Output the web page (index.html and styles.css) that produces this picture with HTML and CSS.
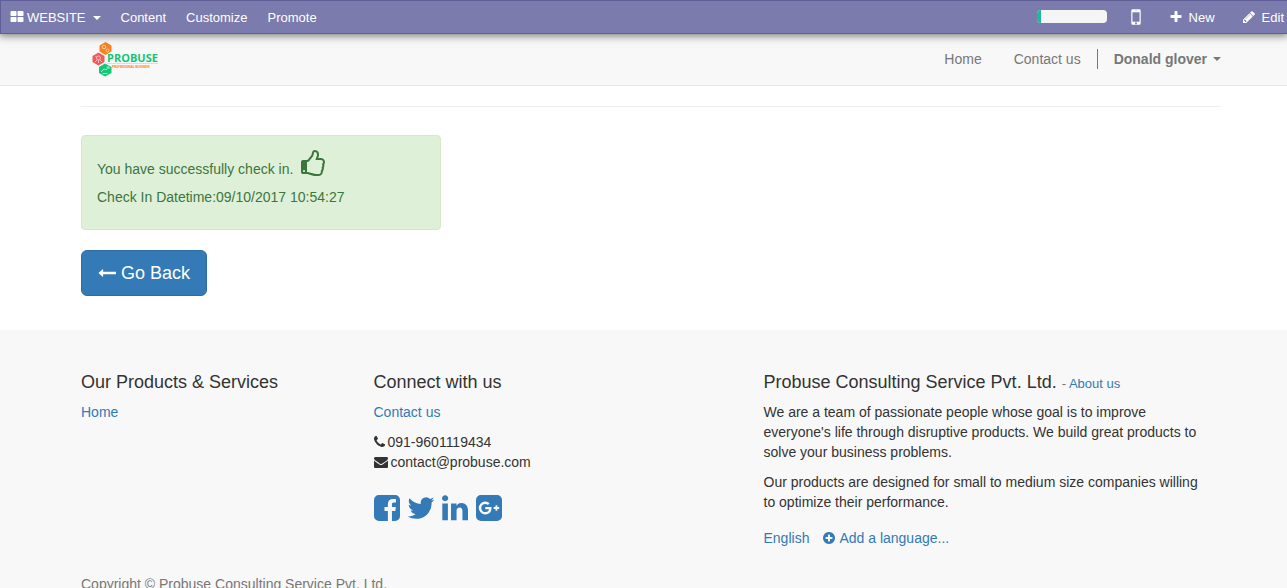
FILE: index.html
```html
<!DOCTYPE html>
<html lang="en">
<head>
<meta charset="utf-8">
<title>Check In | Probuse</title>
<link rel="stylesheet" href="styles.css">
</head>
<body>
<nav class="editor-bar" aria-label="Website editor">
  <div class="editor-menu">
    <button type="button" class="editor-item editor-brand">
      <svg class="icon" viewBox="0 0 1792 1792" aria-hidden="true"><path d="M832 1024v384q0 52-38 90t-90 38h-512q-52 0-90-38t-38-90v-384q0-52 38-90t90-38h512q52 0 90 38t38 90zm0-768v384q0 52-38 90t-90 38h-512q-52 0-90-38t-38-90v-384q0-52 38-90t90-38h512q52 0 90 38t38 90zm896 768v384q0 52-38 90t-90 38h-512q-52 0-90-38t-38-90v-384q0-52 38-90t90-38h512q52 0 90 38t38 90zm0-768v384q0 52-38 90t-90 38h-512q-52 0-90-38t-38-90v-384q0-52 38-90t90-38h512q52 0 90 38t38 90z"/></svg>
      <span class="editor-label">WEBSITE</span><span class="caret"></span>
    </button>
    <a class="editor-item" href="#"><span class="editor-label">Content</span></a>
    <a class="editor-item" href="#"><span class="editor-label">Customize</span></a>
    <a class="editor-item" href="#"><span class="editor-label">Promote</span></a>
  </div>
  <div class="editor-tools">
    <div class="progress" role="progressbar" aria-label="Setup progress" aria-valuenow="6" aria-valuemin="0" aria-valuemax="100"><div class="progress-fill" style="width:6%"></div></div>
    <button type="button" class="editor-item mobile-preview" aria-label="Mobile preview">
      <svg class="icon icon-mobile" viewBox="0 0 1792 1792" aria-hidden="true"><path d="M976 1408q0-33-23.5-56.5t-56.5-23.5-56.5 23.5-23.5 56.5 23.5 56.5 56.5 23.5 56.5-23.5 23.5-56.5zm208-160v-704q0-13-9.5-22.5t-22.5-9.5h-512q-13 0-22.5 9.5t-9.5 22.5v704q0 13 9.5 22.5t22.5 9.5h512q13 0 22.5-9.5t9.5-22.5zm-192-848q0-16-16-16h-160q-16 0-16 16t16 16h160q16 0 16-16zm288-16v1024q0 52-38 90t-90 38h-512q-52 0-90-38t-38-90v-1024q0-52 38-90t90-38h512q52 0 90 38t38 90z"/></svg>
    </button>
    <button type="button" class="editor-item editor-action">
      <svg class="icon" viewBox="0 0 1792 1792" aria-hidden="true"><path d="M1600 736v192q0 40-28 68t-68 28h-416v416q0 40-28 68t-68 28h-192q-40 0-68-28t-28-68v-416h-416q-40 0-68-28t-28-68v-192q0-40 28-68t68-28h416v-416q0-40 28-68t68-28h192q40 0 68 28t28 68v416h416q40 0 68 28t28 68z"/></svg>
      <span class="editor-label">New</span>
    </button>
    <button type="button" class="editor-item editor-action">
      <svg class="icon" viewBox="0 0 1792 1792" aria-hidden="true"><path d="M491 1536l91-91-235-235-91 91v107h128v128h107zm523-928q0-22-22-22-10 0-17 7l-542 542q-7 7-7 17 0 22 22 22 10 0 17-7l542-542q7-7 7-17zm-54-192l416 416-832 832h-416v-416zm683 96q0 53-37 90l-166 166-416-416 166-165q36-38 90-38 53 0 91 38l235 234q37 39 37 91z"/></svg>
      <span class="editor-label">Edit</span>
    </button>
  </div>
</nav>

<header class="site-header">
  <div class="container header-row">
    <a class="logo" href="#" aria-label="Probuse">
      <svg class="logo-image" width="68" height="36" viewBox="0 0 68 36" aria-hidden="true">
        <path class="hex-orange" d="M12.500 0l6 3.500v6l-6 3.500-6-3.500v-6z"/>
        <path class="hex-red" d="M5.500 10.500l6 3.500v6l-6 3.500-6-3.500v-6z"/>
        <path class="hex-green" d="M12 21.500l6.500 3.500v6l-6.500 3.500-6-3.500v-6z"/>
        <g class="hex-detail">
          <circle cx="11" cy="5" r="1.800"/><circle cx="14.500" cy="8.500" r="1.500"/>
          <circle cx="5.500" cy="16" r="2"/><path d="M2 20l2-2M9 20l-2-2M2.500 14l1 1M5.500 18v3"/>
          <path d="M8 30l3-3 2 1 3-3.500M9.500 31.500h5M13.500 25h2.500v2"/>
        </g>
        <path class="logo-rule" d="M14 21.500h51"/>
        <text class="logo-name" x="14" y="20">PROBUSE</text>
        <text class="logo-tagline" x="19" y="26">PROFESSIONAL BUSINESS</text>
      </svg>
    </a>
    <nav class="site-nav" aria-label="Main">
      <a class="nav-link" href="#">Home</a>
      <a class="nav-link" href="#">Contact us</a>
      <span class="nav-divider"></span>
      <button type="button" class="nav-link user-menu"><span>Donald glover</span><span class="caret"></span></button>
    </nav>
  </div>
</header>

<main class="container main">
  <hr class="rule">
  <div class="alert" role="status">
    <p class="alert-line">You have successfully check in. <svg class="thumb" viewBox="0 0 1792 1792" aria-hidden="true"><path d="M384 1344q0-26-19-45t-45-19-45 19-19 45 19 45 45 19 45-19 19-45zm1152-576q0-51-39-89.500t-89-38.500h-352q0-58 48-159.500t48-160.500q0-98-32-145t-128-47q-26 26-38 85t-30.500 125.500-59.500 109.500q-22 23-77 91-4 5-23 30t-31.500 41-34.500 42.500-40 44-38.500 35.500-40 27-35.500 9h-32v640h32q13 0 31.500 3t33 6.500 38 11 35 11.500 35.500 12.500 29 10.500q211 73 342 73h121q192 0 192-167 0-26-5-56 30-16 47.500-52.500t17.500-73.500-18-69q53-50 53-119 0-25-10-55.500t-25-47.500q32-1 53.500-47t21.500-81zm128-1q0 89-49 163 9 33 9 69 0 77-38 144 3 21 3 43 0 101-60 178 1 139-85 219.500t-227 80.500h-129q-96 0-189.500-22.500t-216.500-65.500q-116-40-138-40h-288q-53 0-90.500-37.500t-37.500-90.500v-640q0-53 37.500-90.500t90.500-37.500h274q36-24 137-155 58-75 107-128 24-25 35.500-85.500t30.500-126.500 62-108q39-37 90-37 84 0 151 32.500t102 101.500 35 186q0 93-48 192h176q104 0 180 76t76 179z"/></svg></p>
    <p class="alert-line">Check In Datetime:09/10/2017 10:54:27</p>
  </div>
  <a class="back-button" href="#">
    <svg class="back-arrow" viewBox="0 0 1792 1792" aria-hidden="true"><path d="M1792 800v192q0 14-9 23t-23 9h-1248v224q0 21-19 29t-35-5l-384-350q-10-10-10-23 0-14 10-24l384-354q16-14 35-6 19 9 19 29v224h1248q14 0 23 9t9 23z"/></svg>
    <span>Go Back</span>
  </a>
</main>

<footer class="footer">
  <div class="container">
    <div class="footer-grid">
      <section class="footer-column">
        <h4 class="footer-title">Our Products &amp; Services</h4>
        <p class="text"><a class="link" href="#">Home</a></p>
      </section>
      <section class="footer-column">
        <h4 class="footer-title">Connect with us</h4>
        <p class="text"><a class="link" href="#">Contact us</a></p>
        <ul class="contact-list">
          <li><svg class="icon-phone" viewBox="192 0 1408 1792" aria-hidden="true"><path d="M1600 1240q0 27-10 70.500t-21 68.500q-21 50-122 106-94 51-186 51-27 0-53-3.500t-57.500-12.500-47-14.500-55.500-20.500-49-18q-98-35-175-83-127-79-264-216t-216-264q-48-77-83-175-3-9-18-49t-20.500-55.500-14.500-47-12.500-57.500-3.500-53q0-92 51-186 56-101 106-122 25-11 68.500-21t70.500-10q14 0 21 3 18 6 53 76 11 19 30 54t35 63.500 31 53.500q3 4 17.500 25t21.500 35.500 7 28.500q0 20-28.500 50t-62 55-62 53-28.500 46q0 9 5 22.500t8.500 20.500 14 24 11.500 19q76 137 174 235t235 174q2 1 19 11.500t24 14 20.500 8.500 22.500 5q18 0 46-28.500t53-62 55-62 50-28.500q14 0 28.500 7t35.500 21.500 25 17.500q25 15 53.500 31t63.500 35 54 30q70 35 76 53 3 7 3 21z"/></svg><span>091-9601119434</span></li>
          <li><svg class="icon" viewBox="0 0 1792 1792" aria-hidden="true"><path d="M1792 710v794q0 66-47 113t-113 47h-1472q-66 0-113-47t-47-113v-794q44 49 101 87 362 246 497 345 57 42 92.500 65.500t94.500 48 110 24.500h2q51 0 110-24.500t94.500-48 92.500-65.500q170-123 498-345 57-39 100-87zm0-294q0 79-49 151t-122 123q-376 261-468 325-10 7-42.500 31t-54 38.500-52 32.500-57.500 27-50 9h-2q-23 0-50-9t-57.500-27-52-32.500-54-38.500-42.500-31q-91-64-262-182.500t-205-142.500q-62-42-117-115.500t-55-136.500q0-78 41.500-130t118.500-52h1472q65 0 112.500 47t47.500 113z"/></svg><span>contact@probuse.com</span></li>
        </ul>
        <div class="social">
          <a href="#" aria-label="Facebook"><svg viewBox="128 128 1536 1536" aria-hidden="true"><path d="M1376 128q119 0 203.500 84.500t84.500 203.500v960q0 119-84.500 203.500t-203.500 84.500h-188v-595h199l30-232h-229v-148q0-56 23.500-84t91.500-28l122-1v-207q-63-9-178-9-136 0-217.500 80t-81.500 226v171h-200v232h200v595h-532q-119 0-203.500-84.500t-84.500-203.500v-960q0-119 84.500-203.500t203.500-84.500h960z"/></svg></a>
          <a href="#" aria-label="Twitter"><svg viewBox="128 128 1536 1536" aria-hidden="true"><path d="M1684 408q-67 98-162 167 1 14 1 42 0 130-38 259.500t-115.500 248.500-184.500 210.500-258 146-323 54.500q-271 0-496-145 35 4 78 4 225 0 401-138-105-2-188-64.500t-114-159.500q33 5 61 5 43 0 85-11-112-23-185.500-111.500t-73.500-205.500v-4q68 38 146 41-66-44-105-115t-39-154q0-88 44-163 121 149 294.500 238.500t371.500 99.500q-8-38-8-74 0-134 94.500-228.500t228.500-94.500q140 0 236 102 109-21 205-78-37 115-142 178 93-10 186-50z"/></svg></a>
          <a href="#" aria-label="LinkedIn"><svg viewBox="128 128 1536 1536" aria-hidden="true"><path d="M477 625v991h-330v-991h330zm21-306q1 73-50.500 122t-135.500 49h-2q-82 0-132-49t-50-122q0-74 51.500-122.500t134.500-48.500 133 48.500 51 122.500zm1166 729v568h-329v-530q0-105-40.500-164.500t-126.500-59.500q-63 0-105.500 34.500t-63.500 85.500q-11 30-11 81v553h-329q2-399 2-647t-1-296l-1-48h329v144h-2q20-32 41-56t56.500-52 87-43.500 114.500-15.500q171 0 275 113.500t104 332.500z"/></svg></a>
          <a href="#" aria-label="Google Plus"><svg viewBox="128 128 1536 1536" aria-hidden="true"><path d="M1045 905q0-26-6-64h-362v132h217q-3 24-16.500 50t-37.500 53-66.500 44.500-96.500 17.500q-99 0-169-71t-70-171 70-171 169-71q92 0 153 59l104-101q-108-100-257-100-160 0-272 112.500t-112 271.500 112 271.500 272 112.500q165 0 266.500-105t101.500-270zm345 46h109v-110h-109v-110h-110v110h-110v110h110v110h110v-110zm274-535v960q0 119-84.500 203.500t-203.500 84.500h-960q-119 0-203.500-84.500t-84.500-203.500v-960q0-119 84.500-203.500t203.500-84.500h960q119 0 203.500 84.500t84.500 203.500z"/></svg></a>
        </div>
      </section>
      <section class="footer-column">
        <h4 class="footer-title">Probuse Consulting Service Pvt. Ltd. <small class="title-note">- <a class="link" href="#">About us</a></small></h4>
        <div class="company-text">
          <p class="text">We are a team of passionate people whose goal is to improve everyone's life through disruptive products. We build great products to solve your business problems.</p>
          <p class="text">Our products are designed for small to medium size companies willing to optimize their performance.</p>
        </div>
        <div class="languages">
          <a class="link" href="#">English</a>
          <a class="link add-language" href="#"><svg class="icon-add" viewBox="128 128 1536 1536" aria-hidden="true"><path d="M1344 960v-128q0-26-19-45t-45-19h-256v-256q0-26-19-45t-45-19h-128q-26 0-45 19t-19 45v256h-256q-26 0-45 19t-19 45v128q0 26 19 45t45 19h256v256q0 26 19 45t45 19h128q26 0 45-19t19-45v-256h256q26 0 45-19t19-45zm320-64q0 209-103 385.500t-279.500 279.500-385.500 103-385.500-103-279.500-279.500-103-385.500 103-385.500 279.500-279.500 385.500-103 385.500 103 279.500 279.500 103 385.500z"/></svg><span>Add a language...</span></a>
        </div>
      </section>
    </div>
    <p class="copyright">Copyright © Probuse Consulting Service Pvt. Ltd.</p>
  </div>
</footer>
</body>
</html>
```

FILE: styles.css
```css
* { box-sizing: border-box; }

body {
  margin: 0;
  overflow-x: hidden;
  background: #fff;
  color: #333;
  font-family: "Liberation Sans", Arial, sans-serif;
  font-size: 14px;
  line-height: 20px;
}

p, h4, ul { margin: 0; padding: 0; }
a { text-decoration: none; color: inherit; }
button { border: 0; padding: 0; background: none; color: inherit; font: inherit; cursor: pointer; }
svg { fill: currentColor; }

.container { padding: 0 66px 0 81px; }
.link { color: #337ab7; }
.icon { width: 14px; height: 14px; flex: none; }

.caret {
  border-top: 4px solid;
  border-left: 4px solid transparent;
  border-right: 4px solid transparent;
}

/* Editor bar */
.editor-bar {
  position: relative;
  display: flex;
  justify-content: space-between;
  height: 34px;
  border: 1px solid #5f5e97;
  border-right: 0;
  background: #7c7bad;
  color: #fff;
  font-size: 13px;
  box-shadow: 0 1px 8px 1px rgba(0, 0, 0, 0.5);
}

.editor-menu, .editor-tools { display: flex; align-items: center; }
.editor-item { display: flex; align-items: center; padding: 0 10px; white-space: nowrap; }
.editor-label { padding-top: 2px; }
.editor-brand { gap: 3px; padding-left: 9px; }
.editor-brand .caret { margin: 2px 0 0 4px; }

.progress {
  width: 70px;
  height: 13px;
  margin-bottom: 1px;
  overflow: hidden;
  border-radius: 4px;
  background: #f5f5f5;
}
.progress-fill { height: 100%; background: #21b799; }

.mobile-preview { padding: 0 18px; }
.icon-mobile { width: 22px; height: 22px; }
.editor-action { gap: 6px; padding: 0 5px 0 4px; }
.editor-action + .editor-action { margin-left: 18px; padding-right: 3px; }

/* Site header */
.site-header { border-bottom: 1px solid #e7e7e7; background: #f8f8f8; color: #777; }
.header-row { display: flex; justify-content: space-between; height: 51px; }
.logo { padding: 8px 12px; }
.logo-image { display: block; overflow: visible; }
.hex-orange { fill: #f58220; }
.hex-red { fill: #f05a5b; }
.hex-green { fill: #12c776; }
.hex-detail { fill: none; stroke: #fff; stroke-width: 1; opacity: 0.6; }
.logo-rule { stroke: #ddd; }
.logo-name { fill: #12c776; font: bold 11px "Open Sans", sans-serif; }
.logo-tagline { fill: #f58220; font: bold 3px "Open Sans", sans-serif; }

.site-nav { display: flex; align-items: flex-start; padding-top: 15px; }
.nav-link { padding: 0 16px; }
.nav-divider { width: 1px; height: 20px; background: #777; }
.user-menu { display: flex; align-items: center; gap: 6px; padding-right: 0; font-weight: bold; }

/* Page content */
.main { padding-top: 20px; padding-bottom: 34px; }
.rule { margin: 0 0 28px; border: 0; border-top: 1px solid #eee; }

.alert {
  width: 360px;
  max-width: 100%;
  margin-bottom: 20px;
  padding: 14px 15px 22px;
  border: 1px solid #d6e9c6;
  border-radius: 4px;
  background: #dff0d8;
  color: #3c763d;
}
.alert-line + .alert-line { margin-top: 8px; }
.thumb { width: 28px; height: 28px; margin-left: 2px; vertical-align: -4px; }

.back-button {
  display: inline-flex;
  align-items: center;
  gap: 5px;
  padding: 10px 16px;
  border: 1px solid #2e6da4;
  border-radius: 6px;
  background: #337ab7;
  color: #fff;
  font-size: 18px;
  line-height: 24px;
}
.back-arrow { width: 18px; height: 18px; }

/* Footer */
.footer { padding: 42px 0 24px; background: #f8f8f8; }
.footer-grid { display: grid; grid-template-columns: 3fr 4fr 5fr; margin-right: -30px; }
.footer-column { padding-right: 30px; }
.footer-title { margin-bottom: 10px; font-size: 18px; font-weight: normal; line-height: 20px; }
.title-note { color: #777; font-size: 13px; line-height: 1; }
.text { margin-bottom: 10px; }
.company-text { padding-right: 10px; }

.contact-list { list-style: none; }
.contact-list li { display: flex; align-items: center; gap: 3px; }
.icon-phone { width: 11px; height: 14px; }

.social { display: flex; gap: 8px; margin-top: 23px; color: #337ab7; }
.social svg { display: block; width: 26px; height: 26px; overflow: visible; }

.languages { display: flex; gap: 14px; margin-top: 16px; }
.add-language { display: flex; align-items: center; gap: 4px; }
.icon-add { width: 12px; height: 12px; }

.copyright { margin-top: 26px; color: #777; }
```
